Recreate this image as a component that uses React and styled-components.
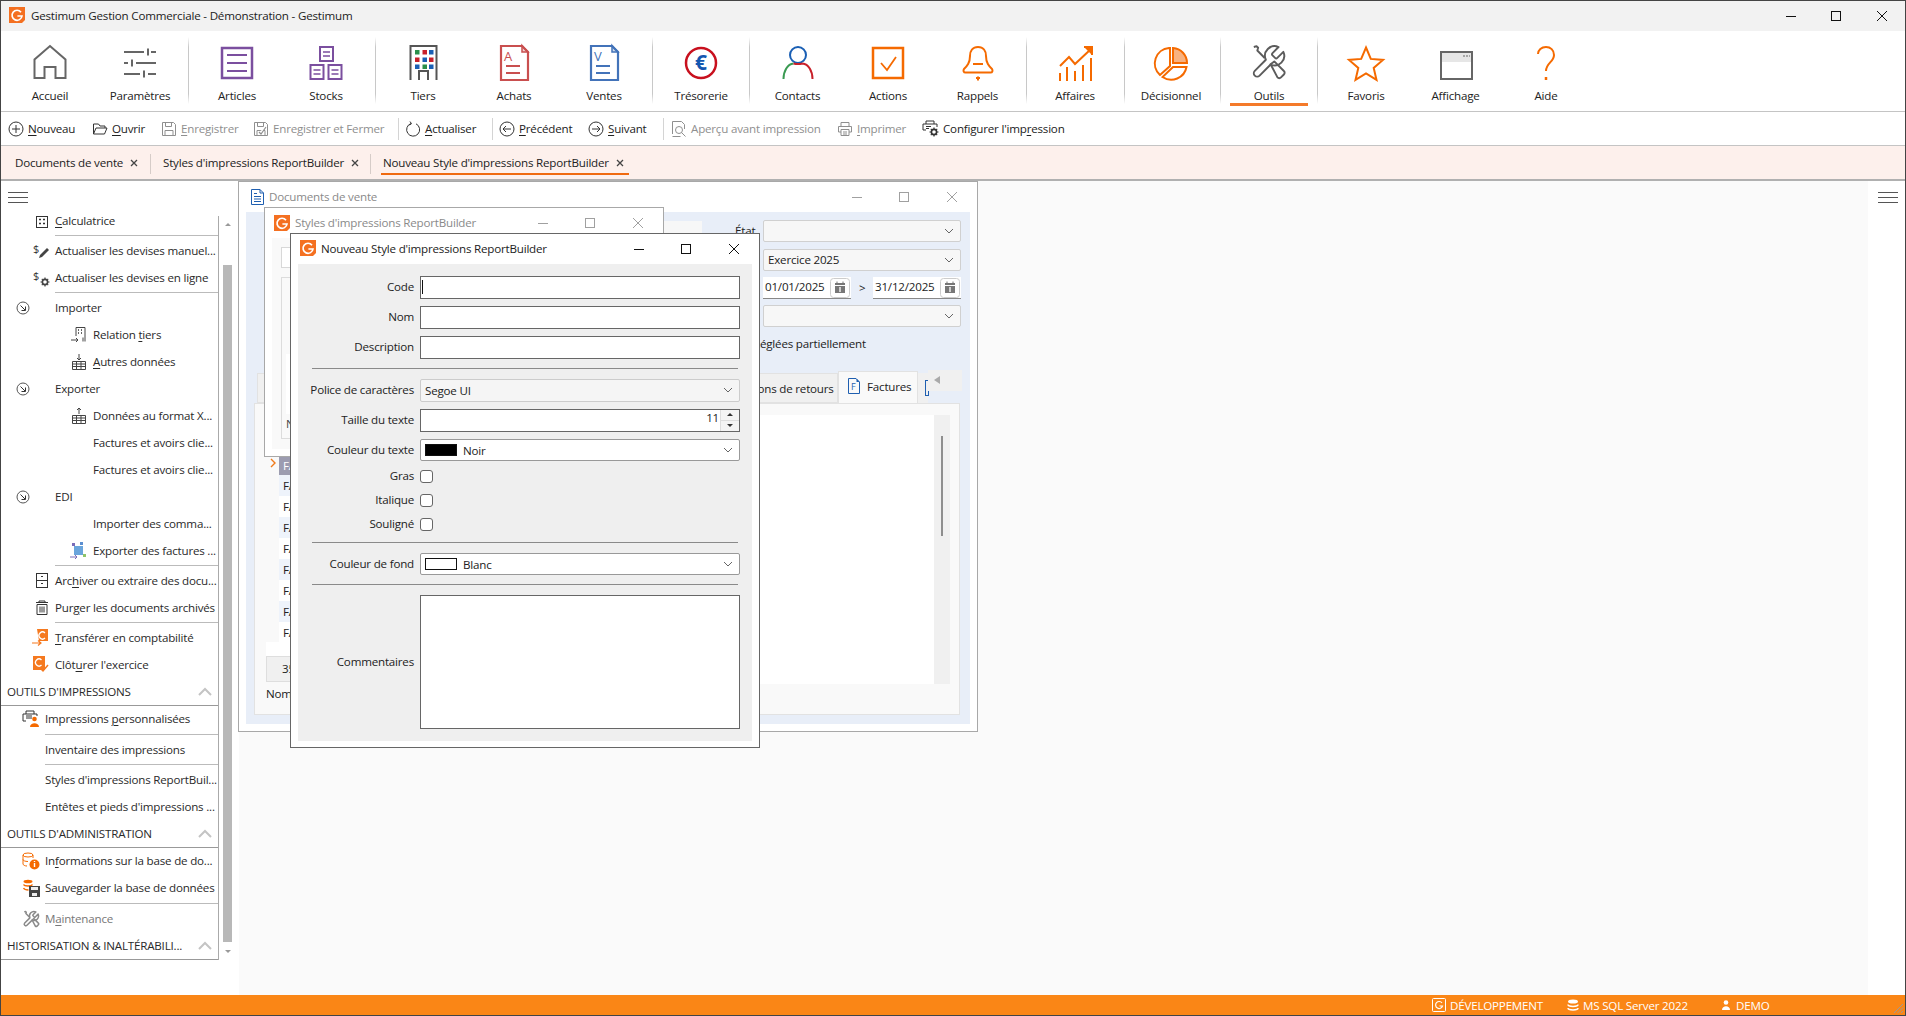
import React from "react";
import styled, { createGlobalStyle } from "styled-components";

const GlobalStyle = createGlobalStyle`
  html, body { margin: 0; padding: 0; background: #fff; }
  body { font-family: "Open Sans", "Noto Sans", "Liberation Sans", sans-serif; font-size: 11.6px; letter-spacing: -0.2px; color: #222; }
  * { box-sizing: border-box; }
`;

const Shell = styled.div`
  position: relative;
  width: 1906px;
  height: 1016px;
  overflow: hidden;
  background: #fff;
  border: 1px solid #444;
`;

const TitleBar = styled.div`
  display: flex;
  align-items: center;
  height: 30px;
  background: #f2f2f2;
  padding: 0 0 2px 8px;
  position: relative;
`;
const AppTitle = styled.span`
  margin-left: 6px;
  color: #222;
`;
const WinButton = styled.span`
  position: absolute;
  top: ${(p) => p.$y}px;
  left: ${(p) => p.$x}px;
  width: 12px;
  height: 12px;
  display: flex;
`;

const Ribbon = styled.div`
  position: relative;
  height: 81px;
  background: #fff;
  border-bottom: 1px solid #c4c4c4;
`;
const RibbonItem = styled.div`
  position: absolute;
  top: 12px;
  left: ${(p) => p.$cx - 46}px;
  width: 90px;
  height: 60px;
  display: flex;
  flex-direction: column;
  align-items: center;
`;
const RibbonLabel = styled.span`
  position: absolute;
  top: 45px;
  line-height: 16px;
  white-space: nowrap;
`;
const RibbonSep = styled.i`
  position: absolute;
  top: 6px;
  left: ${(p) => p.$x - 1}px;
  width: 1px;
  height: 67px;
  background: linear-gradient(#fff, #c8c8c8 15%, #c8c8c8 85%, #fff);
`;
const ActiveMark = styled.i`
  position: absolute;
  left: 1229px;
  top: 72px;
  width: 78px;
  height: 3px;
  background: #f47a2a;
`;

const Toolbar = styled.div`
  display: flex;
  align-items: center;
  height: 34px;
  padding-left: 7px;
  background: #fff;
  border-bottom: 1px solid #c4c4c4;
`;
const ToolButton = styled.div`
  display: flex;
  align-items: center;
  gap: 4px;
  width: ${(p) => p.$w}px;
  flex: none;
  white-space: nowrap;
  color: ${(p) => (p.$off ? "#8f8f8f" : "#222")};
  svg { flex: none; }
`;
const ToolSep = styled.i`
  flex: none;
  width: 1px;
  height: 22px;
  margin-right: ${(p) => p.$gap}px;
  background: #d4d4d4;
`;
const Mn = styled.u`
  text-underline-offset: 2px;
  text-decoration-thickness: 1px;
`;

const TabStrip = styled.div`
  display: flex;
  align-items: flex-start;
  height: 35px;
  background: #fdf0ec;
  border-bottom: 2px solid #b0b0b0;
  padding-left: 14px;
`;
const DocTab = styled.div`
  position: relative;
  display: flex;
  align-items: center;
  gap: 7px;
  flex: none;
  width: ${(p) => p.$w}px;
  height: 33px;
  padding-left: ${(p) => p.$pad}px;
  white-space: nowrap;
  &::after {
    content: "";
    position: absolute;
    right: 0;
    top: 8px;
    width: 1px;
    height: 20px;
    background: ${(p) => (p.$active ? "transparent" : "#d6ccc8")};
  }
  ${(p) =>
    p.$active &&
    `&::before {
      content: "";
      position: absolute;
      left: 10px;
      width: 248px;
      top: 27px;
      height: 1.5px;
      background: #f06a10;
    }`}
`;

const Body = styled.div`
  position: relative;
  height: 814px;
  background: #fafafa;
`;
const SideColumn = styled.div`
  position: absolute;
  left: 0;
  top: 0;
  width: 238px;
  height: 814px;
  background: #fff;
`;
const RightColumn = styled.div`
  position: absolute;
  right: 0;
  top: 0;
  width: 37px;
  height: 814px;
  background: #fff;
`;
const Burger = styled.div`
  position: absolute;
  top: 11px;
  left: ${(p) => p.$x}px;
  width: 20px;
  height: 11px;
  border-top: 1px solid #555;
  border-bottom: 1px solid #555;
  &::after {
    content: "";
    display: block;
    margin-top: 4px;
    height: 1px;
    background: #555;
  }
`;
const MenuList = styled.div`
  position: absolute;
  left: 0;
  top: 35px;
  width: 218px;
  height: 744px;
  border-right: 1px solid #aaa;
`;
const MenuRow = styled.div`
  position: relative;
  height: ${(p) => p.$h || 27}px;
  line-height: ${(p) => p.$lh || 26}px;
  padding-left: ${(p) => p.$x - 1}px;
  white-space: nowrap;
  color: ${(p) => (p.$off ? "#777" : "#2a2a2a")};
`;
const RowIcon = styled.span`
  position: absolute;
  left: ${(p) => p.$x - 1}px;
  top: ${(p) => p.$top ?? 4}px;
  width: 18px;
  height: 18px;
  display: flex;
  align-items: center;
  justify-content: center;
`;
const MenuSep = styled.div`
  margin-left: ${(p) => p.$x - 1}px;
  margin-top: ${(p) => p.$mt || 0}px;
  height: 3px;
  border-top: 1px solid #bbb;
`;
const MenuHeader = styled.div`
  position: relative;
  height: 27px;
  line-height: 26px;
  padding-left: 6px;
  border-bottom: 1px solid #999;
  color: #2a2a2a;
  white-space: nowrap;
  svg { position: absolute; left: 197px; top: 8px; }
`;
const ScrollTrack = styled.div`
  position: absolute;
  left: 222px;
  top: 37px;
  width: 9px;
  height: 740px;
`;
const ScrollThumb = styled.div`
  position: absolute;
  left: 0;
  top: 47px;
  width: 9px;
  height: 677px;
  background: #b8b8b8;
`;
const ScrollArrow = styled.span`
  position: absolute;
  left: ${(p) => p.$x || 2}px;
  top: ${(p) => p.$y}px;
  width: 0;
  height: 0;
  border-left: 3px solid transparent;
  border-right: 3px solid transparent;
  ${(p) => {
    const c = p.$c || "#999";
    return p.$down ? `border-top: 3px solid ${c};` : `border-bottom: 3px solid ${c};`;
  }}
`;

const Window = styled.div`
  position: absolute;
  left: ${(p) => p.$x}px;
  top: ${(p) => p.$y}px;
  width: ${(p) => p.$w}px;
  height: ${(p) => p.$h}px;
  background: #fff;
  border: 1px solid ${(p) => p.$border};
  overflow: hidden;
`;
const WindowTitle = styled.div`
  position: absolute;
  left: ${(p) => p.$x}px;
  top: ${(p) => p.$y}px;
  line-height: 16px;
  white-space: nowrap;
  color: ${(p) => (p.$dim ? "#8a8a8a" : "#222")};
`;
const WindowIcon = styled.span`
  position: absolute;
  left: ${(p) => p.$x}px;
  top: ${(p) => p.$y}px;
  display: flex;
`;
const WindowCtl = styled.span`
  position: absolute;
  left: ${(p) => p.$x - 6}px;
  top: ${(p) => p.$y - 6}px;
  display: flex;
`;

// parts of the windows behind the dialog, only slivers of them stay visible
const BluePane = styled.div`
  position: absolute;
  left: 7px;
  top: 30px;
  width: 724px;
  height: 512px;
  background: #e8eef8;
`;
const PanePart = styled.div`
  position: absolute;
  left: ${(p) => p.$x}px;
  top: ${(p) => p.$y}px;
  width: ${(p) => p.$w}px;
  height: ${(p) => p.$h}px;
  background: ${(p) => p.$bg};
  ${(p) => p.$line && `border: 1px solid ${p.$line};`}
`;
const Combo = styled.div`
  position: absolute;
  left: 524px;
  top: ${(p) => p.$y}px;
  width: 198px;
  height: 22px;
  padding-left: 4px;
  line-height: 20px;
  background: #f7f7f7;
  border: 1px solid #d0d0d0;
  border-radius: 2px;
  svg { position: absolute; right: 6px; top: 7px; }
`;
const DateField = styled.div`
  position: absolute;
  left: ${(p) => p.$x}px;
  top: 95px;
  width: 88px;
  height: 22px;
  padding-left: 2px;
  line-height: 20px;
  background: #fff;
  border-bottom: 1px solid #888;
  svg { position: absolute; right: 1px; top: 1px; }
`;
const PaneText = styled.span`
  position: absolute;
  left: ${(p) => p.$x}px;
  top: ${(p) => p.$y}px;
  line-height: 16px;
  white-space: nowrap;
  color: ${(p) => p.$c || "#222"};
`;
const BackArrow = styled.i`
  position: absolute;
  left: 695px;
  top: 194px;
  width: 0;
  height: 0;
  border-top: 4px solid transparent;
  border-bottom: 4px solid transparent;
  border-right: 6px solid #aaa;
`;
const GridRow = styled.div`
  position: absolute;
  left: 40px;
  top: ${(p) => p.$y}px;
  width: 220px;
  height: ${(p) => p.$h || 21}px;
  line-height: ${(p) => p.$h || 21}px;
  padding-left: 4px;
  background: ${(p) => p.$bg};
  color: ${(p) => p.$c || "#222"};
`;

const DialogBody = styled.div`
  position: absolute;
  left: 7px;
  top: 30px;
  width: 454px;
  height: 477px;
  background: #efefef;
`;
const FormRow = styled.div`
  position: absolute;
  left: 0;
  top: ${(p) => p.$y}px;
  width: 100%;
  height: ${(p) => p.$h || 23}px;
  display: flex;
  align-items: center;
`;
const FieldLabel = styled.label`
  position: relative;
  top: -1px;
  width: 116px;
  text-align: right;
  flex: none;
  white-space: nowrap;
  color: #222;
`;
const TextField = styled.div`
  position: relative;
  margin-left: 6px;
  width: 320px;
  height: 100%;
  background: #fff;
  border: 1px solid #666;
`;
const Caret = styled.i`
  position: absolute;
  left: 1px;
  top: 3px;
  width: 1px;
  height: 14px;
  background: #111;
`;
const SelectBox = styled.div`
  position: relative;
  display: flex;
  align-items: center;
  margin-left: 6px;
  width: 320px;
  height: 100%;
  padding-left: 4px;
  background: ${(p) => p.$bg};
  border: 1px solid ${(p) => p.$line};
  border-radius: 2px;
  svg { position: absolute; right: 6px; top: 7px; }
`;
const Swatch = styled.i`
  display: block;
  width: 32px;
  height: 12px;
  margin-right: 6px;
  background: ${(p) => p.$c};
  border: 1px solid #111;
`;
const SpinValue = styled.span`
  position: absolute;
  right: 20px;
  top: 0;
  line-height: 16px;
`;
const SpinButtons = styled.div`
  position: absolute;
  right: 0;
  top: 0;
  width: 19px;
  height: 21px;
  background: #f4f4f4;
  border-left: 1px solid #ddd;
  &::after {
    content: "";
    position: absolute;
    left: 0;
    right: 0;
    top: 10px;
    height: 1px;
    background: #ddd;
  }
`;
const Tick = styled.input`
  margin: 0 0 0 6px;
  appearance: none;
  width: 13px;
  height: 13px;
  background: #fff;
  border: 1px solid #666;
  border-radius: 3px;
`;
const Rule = styled.hr`
  position: absolute;
  left: 14px;
  top: ${(p) => p.$y}px;
  width: 426px;
  height: 1px;
  margin: 0;
  border: 0;
  background: #8a8a8a;
`;

const StatusBar = styled.div`
  position: absolute;
  left: 0;
  bottom: 0;
  width: 100%;
  height: 20px;
  display: flex;
  align-items: center;
  justify-content: flex-end;
  padding-right: 136px;
  background: #fa8616;
  color: #fff;
`;
const StatusItem = styled.div`
  display: flex;
  align-items: center;
  gap: ${(p) => p.$gap}px;
  width: ${(p) => p.$w}px;
  flex: none;
  white-space: nowrap;
`;
const Grip = styled.span`
  position: absolute;
  right: 1px;
  bottom: 1px;
  display: flex;
`;

/* ---------- icons ---------- */

const Svg = ({ s = 16, w, h, children, ...rest }) => (
  <svg width={w || s} height={h || s} viewBox={`0 0 ${w || s} ${h || s}`} fill="none" overflow="visible" {...rest}>
    {children}
  </svg>
);

const Logo = ({ s = 16 }) => (
  <svg width={s} height={s} viewBox="0 0 16 16">
    <path d="M0 0h16v13l-3 3H0z" fill="#f47021" />
    <path d="M12 5.200A5 5 0 1 0 13 9H8.400" fill="none" stroke="#fff" strokeWidth="1.700" />
  </svg>
);

const Chevron = () => (
  <Svg w={10} h={6}>
    <path d="M1 1l4 4 4-4" stroke="#666" />
  </Svg>
);

const TabCross = () => (
  <Svg s={8}>
    <path d="M1 1l6 6M7 1L1 7" stroke="#444" strokeWidth="1.300" />
  </Svg>
);

const RowPointer = () => (
  <Svg w={6} h={10}>
    <path d="M1 1l4 4-4 4" stroke="#f07a1a" strokeWidth="1.400" />
  </Svg>
);

const WinMin = ({ c }) => <Svg s={12}><path d="M1 6.500h10" stroke={c} /></Svg>;
const WinMax = ({ c }) => <Svg s={12}><rect x="1.500" y="1.500" width="9" height="9" stroke={c} /></Svg>;
const WinClose = ({ c }) => <Svg s={12}><path d="M1 1l10 10M11 1L1 11" stroke={c} /></Svg>;

const DocGlyph = ({ c, letter }) => (
  <g stroke={c} strokeWidth="2.200" fill="none">
    <path d="M28 3H7v34h27V9z" />
    <path d="M28 2.500v6.500h6z" fill={c} fillOpacity=".25" strokeWidth="1.500" />
    <path d="M12 23h14M12 30h14" />
    <text x="10" y="18" fontSize="13" stroke="none" fill={c} fontFamily="Open Sans, sans-serif">{letter}</text>
  </g>
);

const ToolsGlyph = ({ c = "#5c5c5c", sw = 1.200, scale = 1.600 }) => (
  <g transform={`scale(${scale})`} stroke={c} strokeWidth={sw} fill="none" strokeLinejoin="round">
    <path d="M14.700 6.300a1 1 0 0 0 0 1.400l1.600 1.600a1 1 0 0 0 1.400 0l3.770-3.770a6 6 0 0 1-7.940 7.940l-6.910 6.910a2.120 2.120 0 0 1-3-3l6.910-6.910a6 6 0 0 1 7.940-7.940l-3.760 3.760z" />
    <path d="M3 2.500l1.700-.5 1 1-.5 1.700L9.800 9.400M13.500 13.300l2.300-1.800 6 6a1.500 1.500 0 0 1 0 2.200l-1.800 1.800a1.500 1.500 0 0 1-2.200 0z" />
  </g>
);

const RIBBON = {
  home: <path d="M4.500 35V16.500L20 3l15.500 13.500V35h-10V24h-11v11z" stroke="#666" strokeWidth="2" />,
  params: (
    <g stroke="#666" strokeWidth="2">
      <path d="M4 9h20M31 9h5M28 5.500v7M4 20h4M16 20h20M12 16.500v7M4 31h16M28 31h8M24 27.500v7" />
    </g>
  ),
  articles: (
    <g stroke="#7b4f9f" strokeWidth="2.500">
      <rect x="5" y="5" width="30" height="30" />
      <path d="M10 12h20M10 20h20M10 28h20" strokeWidth="2" />
    </g>
  ),
  stocks: (
    <g stroke="#7b4f9f" strokeWidth="2">
      <rect x="14" y="4" width="13" height="14" />
      <rect x="4.500" y="22" width="13" height="14" />
      <rect x="22.500" y="22" width="13" height="14" />
      <path d="M17 9h7M17 13h7M7.500 27h7M7.500 31h7M25.500 27h7M25.500 31h7" strokeWidth="1.500" />
    </g>
  ),
  tiers: (
    <g>
      <path d="M7.500 37V3h26v34M16 37v-9h9v9" stroke="#555" strokeWidth="2" />
      {[
        [12, 7, "#2a8f4a"], [19.5, 7, "#c8202a"], [26, 7, "#1a5fb4"],
        [12, 14.5, "#c8202a"], [19.5, 14.5, "#1a5fb4"], [26, 14.5, "#c8202a"],
        [12, 21.5, "#1a5fb4"], [19.5, 21.5, "#2a8f4a"], [26, 21.5, "#1a5fb4"],
      ].map(([x, y, c]) => <rect key={`${x}-${y}`} x={x} y={y} width="4.500" height="4.500" fill={c} />)}
    </g>
  ),
  achats: <DocGlyph c="#c94f4f" letter="A" />,
  ventes: <DocGlyph c="#4373b9" letter="V" />,
  treso: (
    <g>
      <circle cx="20" cy="20" r="15" stroke="#c8101e" strokeWidth="2.500" />
      <text x="20" y="27" textAnchor="middle" fontSize="21" fontWeight="700" fill="#1457b0" fontFamily="Open Sans, sans-serif">€</text>
    </g>
  ),
  contacts: (
    <g strokeWidth="2" fill="none">
      <circle cx="20" cy="12" r="8" stroke="#1a5fb4" />
      <path d="M5.500 36c0-8 4-15 10-15.500" stroke="#3a9a52" />
      <path d="M34.500 36c0-8-4-15-10-15.500M15.500 20.500c3 .8 6 .8 9 0" stroke="#c8202a" />
    </g>
  ),
  actions: (
    <g stroke="#f56a00" strokeWidth="2.500" fill="none">
      <rect x="5" y="5" width="30" height="30" />
      <path d="M13 20l6 7 9-13" strokeWidth="1.800" />
    </g>
  ),
  rappels: (
    <g stroke="#f56a00" strokeWidth="2" fill="none">
      <path d="M20 4c-5.500 0-8 4-8 9 0 7-3 10-6 13-1 1.500-.5 3.500 1.500 3.500h25c2 0 2.500-2 1.500-3.500-3-3-6-6-6-13 0-5-2.500-9-8-9z" />
      <path d="M15 21h10" />
      <path d="M18 35h4M20 33.500v4" strokeWidth="2" />
    </g>
  ),
  affaires: (
    <g stroke="#f56a00" strokeWidth="2" fill="none">
      <path d="M5 23l9-9 6 7L36 6" />
      <path d="M29 4h8v8" fill="#f56a00" />
      <path d="M5 30v8M12 24v14M20 28v10M28 22v16M36 15v23" />
    </g>
  ),
  decision: (
    <g stroke="#f56a00" strokeWidth="2" fill="none">
      <path d="M22 5a15 15 0 0 1 14 15H22z" fill="#f8b280" />
      <path d="M18 5a15.500 15.500 0 0 0-9 27l10-9V5z" />
      <path d="M11.500 34a15.500 15.500 0 0 0 24-10H22z" />
    </g>
  ),
  outils: <ToolsGlyph />,
  favoris: <path d="M20 4.500l4.800 11.400 12.200 1-9.300 8 2.800 12-10.500-6.400-10.500 6.400 2.800-12-9.300-8 12.200-1z" stroke="#f56a00" strokeWidth="2" />,
  affichage: (
    <g>
      <rect x="5" y="9" width="31" height="27" stroke="#666" strokeWidth="2" />
      <rect x="6" y="10" width="29" height="9" fill="#e6e6e6" />
      <path d="M27 13h7" stroke="#666" strokeDasharray="2 1" />
    </g>
  ),
  aide: (
    <g stroke="#f56a00" strokeWidth="2" fill="none">
      <path d="M12 11c0-4 3.500-7 8-7s8 3 8 8c0 7-8 8-8 16" />
      <path d="M20 34v3" strokeWidth="2.500" />
    </g>
  ),
};

const RIBBON_ITEMS = [
  ["home", "Accueil", 50], ["params", "Paramètres", 140], ["articles", "Articles", 237], ["stocks", "Stocks", 326],
  ["tiers", "Tiers", 423], ["achats", "Achats", 514], ["ventes", "Ventes", 604], ["treso", "Trésorerie", 701],
  ["contacts", "Contacts", 797.5], ["actions", "Actions", 888], ["rappels", "Rappels", 977.5], ["affaires", "Affaires", 1075],
  ["decision", "Décisionnel", 1171], ["outils", "Outils", 1269], ["favoris", "Favoris", 1366], ["affichage", "Affichage", 1455.5], ["aide", "Aide", 1546],
];
const RIBBON_SEPS = [188, 375, 652, 749, 1026, 1124, 1220, 1317];

const Floppy = ({ c, check }) => (
  <Svg s={16}>
    <path d="M1.500 1.500h11l2 2v11h-13z" stroke={c} />
    <path d="M4.500 1.500v4h6v-4M4 14.500v-5h8v5" stroke={c} />
    {check && <path d="M6 11l2 2 5-7" stroke={c} strokeWidth="1.200" fill="#fff" />}
  </Svg>
);
const CircleArrow = ({ d, c = "#333", s = 16 }) => (
  <Svg s={s}>
    <circle cx={s / 2} cy={s / 2} r={s / 2 - 1} stroke={c} />
    <path d={d} stroke={c} />
  </Svg>
);
const Printer = ({ c }) => (
  <Svg s={16}>
    <path d="M4 5V1.500h8V5M4 11H1.500V5.500h13V11H12" stroke={c} />
    <path d="M4 8.500h8v6H4zM6 11h4M6 13h4" stroke={c} />
  </Svg>
);
const Gear = ({ x, y, c = "#333" }) => (
  <g transform={`translate(${x} ${y})`}>
    <circle r="2.600" stroke={c} strokeWidth="1.600" />
    <path d="M0-4.500v1.500M0 3v1.500M-4.500 0H-3M3 0h1.500M-3.200-3.200l1 1M2.200 2.200l1 1M3.200-3.200l-1 1M-2.200 2.200l-1 1" stroke={c} strokeWidth="1.200" />
  </g>
);
const RingArrow = () => (
  <Svg s={14}>
    <circle cx="7" cy="7" r="6" stroke="#555" />
    <path d="M4.500 4.500L9 9M9.500 5.500V9.500H5.500" stroke="#333" />
  </Svg>
);
const CollapseUp = () => (
  <Svg w={14} h={9}>
    <path d="M1 8l6-6 6 6" stroke="#c4c4c4" strokeWidth="2" />
  </Svg>
);
const CalendarBtn = () => (
  <Svg w={20} h={20}>
    <rect x=".5" y=".5" width="19" height="19" rx="3" fill="#fff" stroke="#ccc" />
    <path d="M5 5h10v10H5z" fill="#777" />
    <path d="M5 7.500h10" stroke="#fff" />
    <path d="M10 9v5" stroke="#fff" strokeWidth="1.300" />
    <path d="M7 3.500v2M13 3.500v2" stroke="#777" />
  </Svg>
);

const CalcIcon = () => <Svg s={14}><rect x=".5" y="2.500" width="11" height="11" stroke="#333" /><path d="M3 5.500h2M7 5.500h2M3 9.500h2M7 9.500h2" stroke="#333" strokeWidth="1.500" /></Svg>;
const DollarPen = () => (
  <Svg s={18}>
    <text x="1" y="11" fontSize="11" fill="#333" fontFamily="Open Sans, sans-serif">$</text>
    <path d="M7 16l1-3 7-7 2 2-7 7z" fill="#444" />
  </Svg>
);
const DollarGear = () => (
  <Svg s={18}>
    <text x="1" y="11" fontSize="11" fill="#333" fontFamily="Open Sans, sans-serif">$</text>
    <Gear x={13} y={13} c="#444" />
  </Svg>
);
const BuildingIn = () => <Svg s={18}><path d="M6 10V1.500h9v14M13 15.500v-4" stroke="#444" /><path d="M8 4h1M11 4h1M8 7h1M11 7h1" stroke="#333" strokeWidth="1.500" /><path d="M1 14h7M6 12l2 2-2 2" stroke="#444" /></Svg>;
const GridIn = ({ up }) => (
  <Svg s={18}>
    <path d="M1.500 8.500h13v8h-13zM1.500 11h13M1.500 13.500h13M5.500 8.500v8M10 8.500v8" stroke="#444" />
    <path d={up ? "M8 7V1M6 3l2-2 2 2" : "M8 1v6M6 5l2 2 2-2"} stroke="#444" />
  </Svg>
);
const MixIcon = () => (
  <Svg s={18}>
    <rect x="4" y="4" width="9" height="9" fill="#6aa5dc" />
    <rect x="2" y="1" width="3" height="3" fill="#7a6cb8" />
    <rect x="10" y="0" width="3" height="3" fill="#5b8fd0" />
    <rect x="13" y="12" width="3" height="3" fill="#8ec56a" />
    <path d="M0 15h7M5 13l2 2-2 2" stroke="#7a6cb8" />
  </Svg>
);
const ArchiveIcon = () => <Svg s={16}><rect x="2.500" y=".5" width="11" height="14" stroke="#333" /><path d="M2.500 7.500h11M7 3.500h2M7 10.500h2" stroke="#333" /></Svg>;
const BinIcon = () => <Svg s={16}><path d="M1 2.500h12M4 2.500v-1.500h6v1.500M2 4.500h10v10H2zM5 6.500v6M7 6.500v6M9 6.500v6" stroke="#333" /></Svg>;
const TransferIcon = () => (
  <Svg s={18}>
    <path d="M5 0h11v12H7z" fill="#f5791f" />
    <path d="M13 4a3.500 3.500 0 1 0 0 5" stroke="#fff" strokeWidth="1.300" />
    <path d="M0 14h9M6 11.500l3 2.500-3 2.500" stroke="#f5791f" strokeWidth="1.200" />
  </Svg>
);
const CloseIcon = () => (
  <Svg s={18}>
    <path d="M1 0h12v14H1z" fill="#f5791f" />
    <path d="M9.500 4a3.500 3.500 0 1 0 0 5" stroke="#fff" strokeWidth="1.300" />
    <path d="M8 12l3 3 5-6" stroke="#f5791f" strokeWidth="1.500" />
  </Svg>
);
const PrintUser = () => (
  <Svg s={18}>
    <path d="M4 4V1h8v3M4 11H1V4h14v2M4 6h6M4 8h6" stroke="#333" />
    <circle cx="12.500" cy="9" r="2.300" fill="#f56a00" />
    <path d="M8 17c0-5 9-5 9 0z" fill="#f56a00" />
  </Svg>
);
const DbInfo = () => (
  <Svg s={18}>
    <ellipse cx="6" cy="3" rx="5" ry="2" stroke="#f56a00" />
    <path d="M1 3v9c0 1 2 2 4 2M11 3v3M1 7.500c0 1 2 2 5 2" stroke="#f56a00" />
    <circle cx="12.500" cy="12.500" r="5" fill="#f56a00" />
    <path d="M12.500 11v4M12.500 9v1" stroke="#fff" strokeWidth="1.400" />
  </Svg>
);
const DbSave = () => (
  <Svg s={18}>
    <ellipse cx="6" cy="2.500" rx="4.500" ry="1.800" fill="#f56a00" />
    <path d="M1.500 5.500c1 2 8 2 9 0M1.500 9c1 2 4 2 5 2" stroke="#f56a00" strokeWidth="1.400" />
    <path d="M7 7h11v11H7z" fill="#444" />
    <path d="M9 8h7v3H9zM10 14h5v3h-5z" fill="#eee" />
  </Svg>
);
const DocSmall = () => (
  <Svg s={16}>
    <path d="M10 .5H1.500v15h12V4z" stroke="#1f5fb0" />
    <path d="M10 .5V4h3.500" stroke="#1f5fb0" />
    <path d="M4 4.500h3M4 7.500h7M4 10h7M4 12.500h7" stroke="#1f5fb0" />
  </Svg>
);
const DocF = () => (
  <Svg s={16}>
    <path d="M9 .5H1.500v15h11V4z" stroke="#1f5fb0" />
    <path d="M9.500.5l3 3.500h-3z" fill="#1f5fb0" />
    <text x="4" y="12" fontSize="9" fill="#1f5fb0" fontFamily="Open Sans, sans-serif">F</text>
  </Svg>
);

const SIDE_ROWS = [
  { t: <><Mn>C</Mn>alculatrice</>, x: 55, h: 19, lh: 10, i: <CalcIcon />, ix: 34, top: -4 },
  { sep: 55 },
  { t: "Actualiser les devises manuel...", x: 55, i: <DollarPen />, ix: 32 },
  { t: "Actualiser les devises en ligne", x: 55, i: <DollarGear />, ix: 32 },
  { sep: 55 },
  { t: "Importer", x: 55, i: <RingArrow />, ix: 14 },
  { t: <>Relation <Mn>t</Mn>iers</>, x: 93, i: <BuildingIn />, ix: 70 },
  { t: <><Mn>A</Mn>utres données</>, x: 93, i: <GridIn />, ix: 71 },
  { t: "Exporter", x: 55, i: <RingArrow />, ix: 14 },
  { t: "Données au format X...", x: 93, i: <GridIn up />, ix: 71 },
  { t: "Factures et avoirs clie...", x: 93 },
  { t: "Factures et avoirs clie...", x: 93 },
  { t: "EDI", x: 55, i: <RingArrow />, ix: 14 },
  { t: "Importer des comma...", x: 93 },
  { t: "Exporter des factures ...", x: 93, i: <MixIcon />, ix: 70 },
  { sep: 55 },
  { t: <>Arc<Mn>h</Mn>iver ou extraire des docu...</>, x: 55, i: <ArchiveIcon />, ix: 33 },
  { t: <>Pur<Mn>g</Mn>er les documents archivés</>, x: 55, i: <BinIcon />, ix: 34 },
  { sep: 55 },
  { t: <><Mn>T</Mn>ransférer en comptabilité</>, x: 55, i: <TransferIcon />, ix: 32 },
  { t: <>Clôt<Mn>u</Mn>rer l'exercice</>, x: 55, i: <CloseIcon />, ix: 32 },
  { head: "OUTILS D'IMPRESSIONS" },
  { t: <>Impressions <Mn>p</Mn>ersonnalisées</>, x: 45, h: 28, i: <PrintUser />, ix: 22 },
  { sep: 45 },
  { t: "Inventaire des impressions", x: 45 },
  { sep: 45 },
  { t: "Styles d'impressions ReportBuil...", x: 45 },
  { t: "Entêtes et pieds d'impressions ...", x: 45 },
  { head: "OUTILS D'ADMINISTRATION" },
  { t: <>In<Mn>f</Mn>ormations sur la base de do...</>, x: 45, i: <DbInfo />, ix: 22 },
  { t: "Sauvegarder la base de données", x: 45, i: <DbSave />, ix: 22 },
  { sep: 45, mt: 1 },
  { t: <>M<Mn>a</Mn>intenance</>, x: 45, off: true, i: <Svg s={18}><ToolsGlyph c="#8a8a8a" sw={2} scale={0.75} /></Svg>, ix: 22 },
  { head: "HISTORISATION & INALTÉRABILI..." },
];

const GRID_ROWS = [
  [293, "#eef3fb"], [314, "#fff"], [335, "#eef3fb"], [356, "#fff"], [377, "#eef3fb"], [398, "#fff"], [419, "#eef3fb"], [440, "#fff"],
];

const WindowControls = ({ xs, y, c }) => (
  <>
    <WindowCtl $x={xs[0]} $y={y}><WinMin c={c} /></WindowCtl>
    <WindowCtl $x={xs[1]} $y={y}><WinMax c={c} /></WindowCtl>
    <WindowCtl $x={xs[2]} $y={y}><WinClose c={c} /></WindowCtl>
  </>
);

export default function App() {
  return (
    <>
      <GlobalStyle />
      <Shell>
        <TitleBar>
          <Logo />
          <AppTitle>Gestimum Gestion Commerciale - Démonstration - Gestimum</AppTitle>
          <WinButton $x={1784} $y={9}><WinMin c="#111" /></WinButton>
          <WinButton $x={1829} $y={9}><WinMax c="#111" /></WinButton>
          <WinButton $x={1875} $y={9}><WinClose c="#111" /></WinButton>
        </TitleBar>

        <Ribbon>
          {RIBBON_SEPS.map((x) => <RibbonSep key={x} $x={x} />)}
          {RIBBON_ITEMS.map(([key, label, cx]) => (
            <RibbonItem key={key} $cx={cx}>
              <Svg s={40}>{RIBBON[key]}</Svg>
              <RibbonLabel>{label}</RibbonLabel>
            </RibbonItem>
          ))}
          <ActiveMark />
        </Ribbon>

        <Toolbar>
          <ToolButton $w={84}><CircleArrow d="M8 4v8M4 8h8" /><span><Mn>N</Mn>ouveau</span></ToolButton>
          <ToolButton $w={69}>
            <Svg s={16}><path d="M1.500 13V3h5l1.500 2h5v2M1.500 13l2.500-6h11l-2.500 6z" stroke="#333" /></Svg>
            <span><Mn>O</Mn>uvrir</span>
          </ToolButton>
          <ToolButton $w={92} $off><Floppy c="#8f8f8f" /><span><Mn>E</Mn>nregistrer</span></ToolButton>
          <ToolButton $w={145} $off><Floppy c="#8f8f8f" check /><span>Enregistrer et Fermer</span></ToolButton>
          <ToolSep $gap={6} />
          <ToolButton $w={87}>
            <Svg s={16}><path d="M6 2.500A6.500 6.500 0 1 0 11 2.800M5 .5l1.500 2.200L4.500 4" stroke="#333" /></Svg>
            <span><Mn>A</Mn>ctualiser</span>
          </ToolButton>
          <ToolSep $gap={6} />
          <ToolButton $w={89}><CircleArrow d="M12 8H4.500M7 5L4 8l3 3" /><span><Mn>P</Mn>récédent</span></ToolButton>
          <ToolButton $w={75}><CircleArrow d="M4 8h7.500M9 5l3 3-3 3" /><span><Mn>S</Mn>uivant</span></ToolButton>
          <ToolSep $gap={7} />
          <ToolButton $w={166} $off>
            <Svg s={16}><path d="M1.500 13V.5h9l3 3V8" stroke="#8f8f8f" /><circle cx="8" cy="9" r="3.500" stroke="#8f8f8f" /><path d="M10.500 11.500l4 4M1.500 15.500h8" stroke="#8f8f8f" /></Svg>
            <span>Aperçu avant impression</span>
          </ToolButton>
          <ToolButton $w={85} $off><Printer c="#8f8f8f" /><span><Mn>I</Mn>mprimer</span></ToolButton>
          <ToolButton $w={160}>
            <Svg s={17}><path d="M4 4V1h8v3M4 10H1V4h14v3M4 6.500h5M4 8.500h3" stroke="#333" /><Gear x={12} y={12} /></Svg>
            <span>Configurer l'imp<Mn>r</Mn>ession</span>
          </ToolButton>
        </Toolbar>

        <TabStrip>
          <DocTab $w={136} $pad={0}>Documents de vente<TabCross /></DocTab>
          <DocTab $w={220} $pad={12}>Styles d'impressions ReportBuilder<TabCross /></DocTab>
          <DocTab $w={262} $pad={12} $active>Nouveau Style d'impressions ReportBuilder<TabCross /></DocTab>
        </TabStrip>

        <Body>
          <SideColumn>
            <Burger $x={7} />
            <MenuList>
              {SIDE_ROWS.map((r, i) => {
                if (r.sep) return <MenuSep key={i} $x={r.sep} $mt={r.mt} />;
                if (r.head) return <MenuHeader key={i}>{r.head}<CollapseUp /></MenuHeader>;
                return (
                  <MenuRow key={i} $x={r.x} $off={r.off} $h={r.h} $lh={r.lh}>
                    {r.i && <RowIcon $x={r.ix} $top={r.top}>{r.i}</RowIcon>}
                    {r.t}
                  </MenuRow>
                );
              })}
            </MenuList>
            <ScrollTrack>
              <ScrollArrow $y={5} />
              <ScrollThumb />
              <ScrollArrow $y={732} $down />
            </ScrollTrack>
          </SideColumn>
          <RightColumn><Burger $x={10} /></RightColumn>

          {/* Documents de vente */}
          <Window $x={237} $y={0} $w={740} $h={551} $border="#a8a8a8">
            <WindowIcon $x={11} $y={7}><DocSmall /></WindowIcon>
            <WindowTitle $x={30} $y={7} $dim>Documents de vente</WindowTitle>
            <WindowControls xs={[618, 665, 713]} y={15} c="#a0a0a0" />
            <BluePane />
            <PanePart $x={420} $y={39} $w={43} $h={30} $bg="#f7f7f7" />
            <PaneText $x={496} $y={41}>État</PaneText>
            <Combo $y={38}><Chevron /></Combo>
            <Combo $y={67}>Exercice 2025<Chevron /></Combo>
            <DateField $x={524}>01/01/2025<CalendarBtn /></DateField>
            <PaneText $x={620} $y={98}>&gt;</PaneText>
            <DateField $x={634}>31/12/2025<CalendarBtn /></DateField>
            <Combo $y={123}><Chevron /></Combo>
            <PaneText $x={514} $y={154}>Réglées partiellement</PaneText>

            <PanePart $x={18} $y={191} $w={581} $h={30} $bg="#f0f0f0" $line="#e2e2e2" />
            <PaneText $x={480} $y={199}>Réceptions de retours</PaneText>
            <PanePart $x={15} $y={221} $w={706} $h={312} $bg="#f9f9f9" $line="#e2e2e2" />
            <PanePart $x={599} $y={189} $w={80} $h={33} $bg="#f9f9f9" $line="#e2e2e2" />
            <WindowIcon $x={608} $y={196}><DocF /></WindowIcon>
            <PaneText $x={628} $y={197}>Factures</PaneText>
            <PanePart $x={679} $y={191} $w={10} $h={30} $bg="#f0f0f0" />
            <PanePart $x={686} $y={198} $w={4} $h={16} $bg="transparent" $line="#1f5fb0" />
            <PanePart $x={689} $y={188} $w={34} $h={21} $bg="#f0f0f0" />
            <BackArrow />

            <PanePart $x={470} $y={233} $w={225} $h={269} $bg="#fff" />
            <PanePart $x={695} $y={233} $w={16} $h={269} $bg="#f0f0f0" />
            <PanePart $x={702} $y={254} $w={2} $h={100} $bg="#8e8e8e" />

            <WindowIcon $x={31} $y={276}><RowPointer /></WindowIcon>
            <GridRow $y={275} $h={18} $bg="#9c9cb0" $c="#fff">FA</GridRow>
            {GRID_ROWS.map(([y, bg]) => <GridRow key={y} $y={y} $bg={bg}>FA</GridRow>)}
            <PanePart $x={27} $y={460} $w={240} $h={14} $bg="#fff" />
            <PanePart $x={27} $y={474} $w={240} $h={26} $bg="#f0f0f0" $line="#dedede" />
            <PaneText $x={43} $y={479}>35</PaneText>
            <PaneText $x={27} $y={504}>Nom</PaneText>
          </Window>

          {/* Styles d'impressions ReportBuilder */}
          <Window $x={263} $y={26} $w={400} $h={250} $border="#a8a8a8">
            <WindowIcon $x={9} $y={7}><Logo /></WindowIcon>
            <WindowTitle $x={30} $y={7} $dim>Styles d'impressions ReportBuilder</WindowTitle>
            <WindowControls xs={[278, 325, 373]} y={15} c="#a0a0a0" />
            <PanePart $x={7} $y={30} $w={380} $h={211} $bg="#f9f9f9" />
            <PanePart $x={16} $y={39} $w={360} $h={21} $bg="#fff" $line="#d8d8d8" />
            <PanePart $x={16} $y={69} $w={360} $h={162} $bg="#f9f9f9" $line="#dcdcdc" />
            <PanePart $x={21} $y={146} $w={340} $h={60} $bg="#fff" />
            <PaneText $x={21} $y={208} $c="#444">Nom</PaneText>
          </Window>

          {/* Nouveau Style d'impressions ReportBuilder */}
          <Window $x={289} $y={52} $w={470} $h={515} $border="#666">
            <WindowIcon $x={9} $y={6}><Logo /></WindowIcon>
            <WindowTitle $x={30} $y={7}>Nouveau Style d'impressions ReportBuilder</WindowTitle>
            <WindowControls xs={[348, 395, 443]} y={15} c="#111" />
            <DialogBody>
              <FormRow $y={12}><FieldLabel>Code</FieldLabel><TextField><Caret /></TextField></FormRow>
              <FormRow $y={42}><FieldLabel>Nom</FieldLabel><TextField /></FormRow>
              <FormRow $y={72}><FieldLabel>Description</FieldLabel><TextField /></FormRow>
              <Rule $y={104} />
              <FormRow $y={115}>
                <FieldLabel>Police de caractères</FieldLabel>
                <SelectBox $bg="#f5f5f5" $line="#ccc">Segoe UI<Chevron /></SelectBox>
              </FormRow>
              <FormRow $y={145}>
                <FieldLabel>Taille du texte</FieldLabel>
                <TextField>
                  <SpinValue>11</SpinValue>
                  <SpinButtons>
                    <ScrollArrow $x={6} $y={3} $c="#333" />
                    <ScrollArrow $x={6} $y={14} $c="#333" $down />
                  </SpinButtons>
                </TextField>
              </FormRow>
              <FormRow $y={175} $h={22}>
                <FieldLabel>Couleur du texte</FieldLabel>
                <SelectBox $bg="#fff" $line="#999"><Swatch $c="#000" />Noir<Chevron /></SelectBox>
              </FormRow>
              <FormRow $y={203} $h={18}><FieldLabel>Gras</FieldLabel><Tick type="checkbox" readOnly /></FormRow>
              <FormRow $y={227} $h={18}><FieldLabel>Italique</FieldLabel><Tick type="checkbox" readOnly /></FormRow>
              <FormRow $y={251} $h={18}><FieldLabel>Souligné</FieldLabel><Tick type="checkbox" readOnly /></FormRow>
              <Rule $y={278} />
              <FormRow $y={289} $h={22}>
                <FieldLabel>Couleur de fond</FieldLabel>
                <SelectBox $bg="#fff" $line="#999"><Swatch $c="#fff" />Blanc<Chevron /></SelectBox>
              </FormRow>
              <Rule $y={320} />
              <FormRow $y={331} $h={134}><FieldLabel>Commentaires</FieldLabel><TextField /></FormRow>
            </DialogBody>
          </Window>
        </Body>

        <StatusBar>
          <StatusItem $w={135} $gap={4}>
            <Svg s={14}><rect x=".5" y=".5" width="13" height="13" rx="1" stroke="#fff" /><path d="M10 5A3.500 3.500 0 1 0 10.500 8H7.500" stroke="#fff" strokeWidth="1.200" /></Svg>
            <span>DÉVELOPPEMENT</span>
          </StatusItem>
          <StatusItem $w={154} $gap={4}>
            <Svg s={12}><ellipse cx="6" cy="2.500" rx="5" ry="2" fill="#fff" /><path d="M1 5.500c0 2.500 10 2.500 10 0M1 9c0 2.500 10 2.500 10 0" stroke="#fff" strokeWidth="1.500" /></Svg>
            <span>MS SQL Server 2022</span>
          </StatusItem>
          <StatusItem $w={48} $gap={5}>
            <Svg s={10}><circle cx="5" cy="2.500" r="2.300" fill="#fff" /><path d="M1 10c0-5 8-5 8 0z" fill="#fff" /></Svg>
            <span>DEMO</span>
          </StatusItem>
          <Grip>
            <Svg s={12}><path d="M11 2L2 11M11 5.500L5.500 11M11 9l-2 2" stroke="#999" /></Svg>
          </Grip>
        </StatusBar>
      </Shell>
    </>
  );
}
